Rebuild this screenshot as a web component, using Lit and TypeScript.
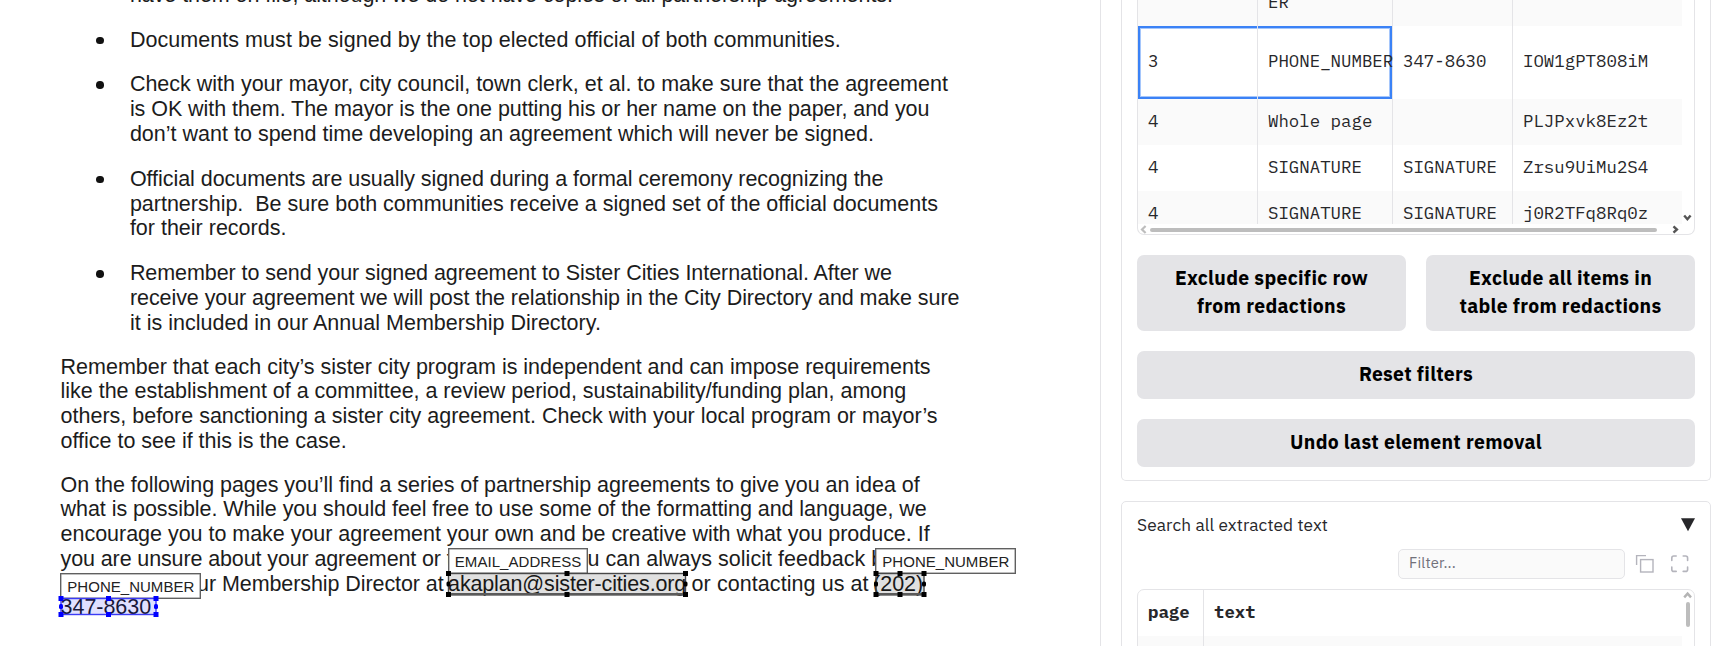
import { LitElement, html, css, svg, nothing } from "lit";
import { customElement, property } from "lit/decorators.js";

/** Text spread over a given advance width by letter spacing. */
@customElement("fit-text")
class FitText extends LitElement {
  @property() text = "";
  @property({ type: Number }) width = 0;

  static styles = css`
    :host { display: inline-block; white-space: pre; flex: none; }
    .run { display: inline-block; }
  `;

  async firstUpdated() {
    await document.fonts.ready;
    const run = this.renderRoot.querySelector(".run") as HTMLElement;
    const natural = run.getBoundingClientRect().width;
    if (this.width && natural) {
      run.style.letterSpacing = `${(this.width - natural) / this.text.length}px`;
    }
  }

  render() {
    return html`<span class="run">${this.text}</span>`;
  }
}

type Line = [string, number];

const BULLETS: Line[][] = [
  [["Documents must be signed by the top elected official of both communities.", 711]],
  [
    ["Check with your mayor, city council, town clerk, et al. to make sure that the agreement", 818],
    ["is OK with them. The mayor is the one putting his or her name on the paper, and you", 799.5],
    ["don’t want to spend time developing an agreement which will never be signed.", 744],
  ],
  [
    ["Official documents are usually signed during a formal ceremony recognizing the", 753.5],
    ["partnership.  Be sure both communities receive a signed set of the official documents", 808],
    ["for their records.", 156.5],
  ],
  [
    ["Remember to send your signed agreement to Sister Cities International. After we", 762],
    ["receive your agreement we will post the relationship in the City Directory and make sure", 829.5],
    ["it is included in our Annual Membership Directory.", 471],
  ],
];

const PARA: Line[] = [
  ["Remember that each city’s sister city program is independent and can impose requirements", 870],
  ["like the establishment of a committee, a review period, sustainability/funding plan, among", 845.5],
  ["others, before sanctioning a sister city agreement. Check with your local program or mayor’s", 877],
  ["office to see if this is the case.", 286],
];

const PARA2: Line[] = [
  ["On the following pages you’ll find a series of partnership agreements to give you an idea of", 859],
  ["what is possible. While you should feel free to use some of the formatting and language, we", 866],
  ["encourage you to make your agreement your own and be creative with what you produce. If", 869],
];

interface Mark {
  kind: string;
  x: number; y: number; w: number; h: number;
  labelW: number; textW: number;
  tone: "dark" | "blue";
}

const MARKS: Mark[] = [
  { kind: "EMAIL_ADDRESS", x: 448.5, y: 573.5, w: 237, h: 21, labelW: 140, textW: 126.5, tone: "dark" },
  { kind: "PHONE_NUMBER", x: 876, y: 573.5, w: 48, h: 21, labelW: 141, textW: 127, tone: "dark" },
  { kind: "PHONE_NUMBER", x: 61, y: 598.5, w: 95, h: 16, labelW: 141, textW: 127, tone: "blue" },
];

@customElement("doc-page")
class DocPage extends LitElement {
  static styles = css`
    :host {
      display: block; position: relative; box-sizing: border-box;
      width: 1101px; height: 646px; overflow: hidden;
      border-right: 1px solid #e4e4e7;
      font: 21.5px/24.74px "Liberation Sans", Arial, sans-serif;
      color: #1c1c1c; background: #fff;
    }
    .page { margin-top: -17.4px; padding-left: 60.6px; }
    .line { display: flex; height: 24.74px; }
    .line.last { margin-top: -1px; }
    ul { list-style: none; margin: 0 0 -1px; padding: 0 0 0 69.3px; }
    li { margin-bottom: 20.2px; }
    li.marked > .line:first-child::before {
      content: ""; flex: none; width: 7.6px; height: 7.6px; border-radius: 50%;
      background: #111; margin: 9px 26.2px 0 -33.8px;
    }
    .para { margin-bottom: 19.2px; }
    .para.closing { margin-bottom: 0; }
    .gap { flex: none; }
    .overlay { position: absolute; left: 0; top: 0; }
    .tag {
      position: absolute; box-sizing: border-box; height: 26px;
      border: 1px solid #606060; box-shadow: inset 0 0 0 .5px #808080; background: #fff; color: #222;
      font-size: 15px; line-height: 25px; padding-left: 6px; overflow: hidden;
    }
  `;

  private lines(lines: Line[]) {
    return lines.map(([t, w]) => html`<div class="line"><fit-text .text=${t} .width=${w}></fit-text></div>`);
  }

  private mark(m: Mark) {
    const c = m.tone === "blue" ? "#0000ff" : "#000";
    const edge = m.tone === "blue" ? "#3b3bf5" : "#484848";
    const fill = m.tone === "blue" ? "rgba(0,0,255,.12)" : "rgba(0,0,0,.12)";
    const xs = [m.x, m.x + m.w / 2, m.x + m.w];
    const ys = [m.y, m.y + m.h / 2, m.y + m.h];
    return svg`
      <rect x=${m.x} y=${m.y} width=${m.w} height=${m.h} fill=${fill} stroke=${edge} stroke-width="1.4"/>
      ${m.tone === "dark"
        ? svg`<rect x=${m.x} y=${m.y + m.h - 1.5} width=${m.w} height="2.6" fill="#5a5a5a"/>`
        : nothing}
      ${xs.map((x, i) => ys.map((y, j) => {
        if (i === 1 && j === 1) return nothing;
        const side = j === 1;
        return svg`<rect x=${x - (side ? 2 : 2.5)} y=${y - 2.5} width=${side ? 4 : 5} height="5" rx=${side ? 1.5 : 0} fill=${c}/>`;
      }))}`;
  }

  render() {
    return html`
      <div class="page">
        <ul>
          <li>${this.lines([["have them on file, although we do not have copies of all partnership agreements.", 763]])}</li>
          ${BULLETS.map((b) => html`<li class="marked">${this.lines(b)}</li>`)}
        </ul>
        <div class="para">${this.lines(PARA)}</div>
        <div class="para closing">
          ${this.lines(PARA2)}
          <div class="line">
            <fit-text .text=${"you are unsure about your agreement or t"} .width=${392}></fit-text>
            <span class="gap" style="width:135px"></span>
            <fit-text .text=${"u can always solicit feedback by"} .width=${306.5}></fit-text>
          </div>
          <div class="line">
            <span class="gap" style="width:136.5px"></span>
            <fit-text .text=${"ur Membership Director at"} .width=${246.5}></fit-text>
            <span class="gap" style="width:4.5px"></span>
            <fit-text .text=${"akaplan@sister-cities.org"} .width=${238}></fit-text>
            <span class="gap" style="width:5.5px"></span>
            <fit-text .text=${"or contacting us at"} .width=${177}></fit-text>
            <span class="gap" style="width:4.5px"></span>
            <fit-text .text=${"(202)"} .width=${50}></fit-text>
          </div>
          <div class="line last"><fit-text .text=${"347-8630"} .width=${90.5}></fit-text></div>
        </div>
      </div>
      ${MARKS.map((m) => html`<div class="tag"
        style="left:${m.x - 0.7}px;top:${m.y - 25.7}px;width:${m.labelW}px"
        ><fit-text .text=${m.kind} .width=${m.textW}></fit-text></div>`)}
      <svg class="overlay" width="1100" height="646">${MARKS.map((m) => this.mark(m))}</svg>
    `;
  }
}

const ROWS: { h: string; cells: string[] }[] = [
  { h: "er", cells: ["", "ER", "", ""] },
  { h: "sel", cells: ["3", "PHONE_NUMBER", "347-8630", "IOW1gPT808iM"] },
  { h: "", cells: ["4", "Whole page", "", "PLJPxvk8Ez2t"] },
  { h: "", cells: ["4", "SIGNATURE", "SIGNATURE", "Zrsu9UiMu2S4"] },
  { h: "", cells: ["4", "SIGNATURE", "SIGNATURE", "j0R2TFq8Rq0z"] },
];

@customElement("side-panel")
class SidePanel extends LitElement {
  static styles = css`
    :host {
      display: block; width: 590px; height: 646px; overflow: hidden; margin-left: 20px;
      font-family: "IBM Plex Sans", "Noto Sans", sans-serif; color: #27272a;
    }
    .card { box-sizing: border-box; border: 1px solid #e4e4e7; background: #fff; padding: 0 15px; }
    .card.top { height: 481px; border-top: 0; border-radius: 0 0 5px 5px; }
    .card.next { height: 200px; margin-top: 20px; border-radius: 5px; }
    .mono { font-family: "IBM Plex Mono", "Liberation Mono", monospace; font-size: 17.4px; }
    .table {
      box-sizing: border-box; height: 235px; border: 1px solid #e4e4e7; border-top: 0;
      border-radius: 0 0 7px 7px; display: grid; grid-template-columns: 544px 1fr; grid-template-rows: 224px 10px;
    }
    .rows { overflow: hidden; }
    .row { display: grid; grid-template-columns: 120px 135px 120px 1fr; height: 46px; position: relative; }
    .row:nth-child(odd) { background: #fafafa; }
    .row.er { height: 26px; }
    .row.er .cell { height: 26px; align-items: flex-end; }
    .row.er .cell span { line-height: 20px; padding-bottom: 11.5px; }
    .row.sel { height: 73px; }
    .cell {
      display: flex; align-items: center; box-sizing: border-box; padding: 0 0 3px 10px; white-space: pre;
      border-right: 1px solid #e4e4e7;
    }
    .cell:last-child { border-right: 0; }
    .row.sel::before {
      content: ""; position: absolute; left: 0; top: 0; width: 254px; height: 73px; box-sizing: border-box;
      border: 2px solid #3b82f6; box-shadow: inset 0 0 0 1px #a5c6fb;
    }
    .row.sel .cell { position: relative; padding-bottom: 5px; }
    .vbar svg, .hbar svg { display: block; }
    .pair { display: grid; grid-template-columns: 269px 269px; gap: 20px; margin-top: 20px; }
    .btn {
      display: flex; flex-direction: column; align-items: center; justify-content: center; box-sizing: border-box;
      height: 48px; border: 0; border-radius: 7px; background: #e4e4e7; color: #000;
      font-size: 19.4px; font-weight: 700; line-height: 28px; width: 558px; padding-bottom: 3px;
    }
    .btn.tall { width: 269px; height: 76px; }
    .btn.solo { margin-top: 20px; }
    .head { display: flex; justify-content: space-between; height: 47px; box-sizing: border-box; padding-top: 10px; font-size: 17.3px; line-height: 26px; }
    .tri { margin-top: 6px; }
    .tools { display: flex; height: 40px; align-items: flex-start; justify-content: flex-end; }
    .filter {
      box-sizing: border-box; width: 227px; height: 30px; border: 1px solid #e4e4e7; border-radius: 5px;
      background: #fafafa; color: #71717a; font-size: 14.8px; line-height: 26px; padding-left: 10px;
    }
    .icon { display: block; margin-top: 5px; flex: none; }
    .icon.copy { margin-left: 10px; }
    .icon.full { margin-left: 15px; margin-right: 5px; }
    .table2 {
      box-sizing: border-box; height: 120px; border: 1px solid #e4e4e7; border-radius: 7px 7px 0 0;
      display: grid; grid-template-columns: 544px 1fr;
    }
    .trow { display: grid; grid-template-columns: 66px 1fr; height: 46px; font-weight: 700; }
    .trow.alt { background: #fafafa; }
  `;

  render() {
    return html`
      <div class="card top">
        <div class="table mono">
          <div class="rows">
            ${ROWS.map((r) => html`<div class="row ${r.h}">${r.cells.map((c) => html`<div class="cell"><span>${c}</span></div>`)}</div>`)}
          </div>
          <div class="vbar">
            <svg width="12" height="224"><path d="M2.2 215.4 5.4 219.2 8.6 215.4" fill="none" stroke="#555" stroke-width="2.4"/></svg>
          </div>
          <div class="hbar">
            <svg width="544" height="10">
              <path d="M7.6 2 4 5.5 7.6 9" fill="none" stroke="#bdbdbd" stroke-width="2.2"/>
              <rect x="12" y="4" width="507" height="4" rx="2" fill="#bdbdbd"/>
              <path d="M535.5 2.4 538.9 5.5 535.5 8.6" fill="none" stroke="#555" stroke-width="2.4"/>
            </svg>
          </div>
        </div>
        <div class="pair">
          <div class="btn tall">
            <fit-text .text=${"Exclude specific row"} .width=${193}></fit-text>
            <fit-text .text=${"from redactions"} .width=${149}></fit-text>
          </div>
          <div class="btn tall">
            <fit-text .text=${"Exclude all items in"} .width=${183}></fit-text>
            <fit-text .text=${"table from redactions"} .width=${202}></fit-text>
          </div>
        </div>
        <div class="btn solo"><fit-text .text=${"Reset filters"} .width=${114}></fit-text></div>
        <div class="btn solo"><fit-text .text=${"Undo last element removal"} .width=${252}></fit-text></div>
      </div>
      <div class="card next">
        <div class="head">
          <fit-text .text=${"Search all extracted text"} .width=${191}></fit-text>
          <svg class="tri" width="14" height="14"><path d="M0 .2H14L7 13.2Z" fill="#27272a"/></svg>
        </div>
        <div class="tools">
          <div class="filter"><fit-text .text=${"Filter..."} .width=${47}></fit-text></div>
          <svg class="icon copy" width="20" height="20" fill="none" stroke="#b4b4bc" stroke-width="1.4">
            <rect x="5.6" y="5.6" width="12.4" height="12.4"/><path d="M1.6 11V1.6H11"/>
          </svg>
          <svg class="icon full" width="20" height="20" fill="none" stroke="#b4b4bc" stroke-width="1.6" stroke-linecap="round" stroke-linejoin="round">
            <path d="M1.8 6.4V4Q1.8 2 3.8 2H6.2M13.2 2H15.6Q17.6 2 17.6 4V6.4M17.6 13V15.4Q17.6 17.4 15.6 17.4H13.2M6.2 17.4H3.8Q1.8 17.4 1.8 15.4V13"/>
          </svg>
        </div>
        <div class="table2 mono">
          <div>
            <div class="trow"><div class="cell">page</div><div class="cell">text</div></div>
            <div class="trow alt"><div class="cell"></div><div class="cell"></div></div>
          </div>
          <svg width="12" height="50">
            <path d="M2.2 7.4 5.6 3.6 9 7.4" fill="none" stroke="#b4b4b4" stroke-width="2.4"/>
            <rect x="4" y="12" width="4" height="25" rx="2" fill="#bdbdbd"/>
          </svg>
        </div>
      </div>
    `;
  }
}

@customElement("app-root")
class AppRoot extends LitElement {
  static styles = css`
    :host { display: flex; width: 1724px; height: 646px; overflow: hidden; background: #fff; }
  `;
  render() {
    return html`<doc-page></doc-page><side-panel></side-panel>`;
  }
}
